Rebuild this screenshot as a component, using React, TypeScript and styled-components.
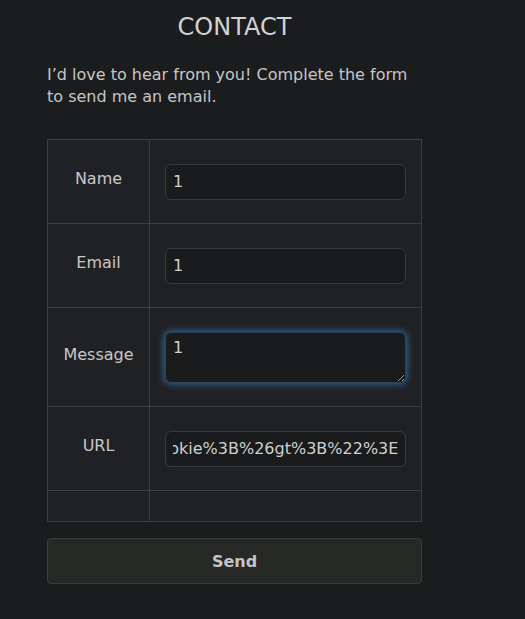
import React, { useEffect, useRef } from "react";
import styled, { createGlobalStyle } from "styled-components";

const Global = createGlobalStyle`
  html, body { margin: 0; padding: 0; background: #1b1c1e; }
  body { font-family: "DejaVu Sans", "Liberation Sans", sans-serif; color: #c9c9c9; }
`;

const Page = styled.div`
  width: 375px;
  margin-left: 47px;
  padding-top: 12px;
`;

const Title = styled.h1`
  margin: 0;
  text-align: center;
  font-size: 24px;
  font-weight: normal;
  line-height: 30px;
  color: #d2d2d2;
`;

const Intro = styled.p`
  margin: 22px 0 31px;
  font-size: 16px;
  line-height: 22px;
  color: #c6c6c6;
`;

const Table = styled.table`
  width: 375px;
  table-layout: fixed;
  border-collapse: collapse;
  background: #202124;
`;

const Row = styled.tr<{ $h: number }>`
  height: ${(p) => p.$h}px;
`;

const LabelCell = styled.td`
  width: 101px;
  border: 1px solid #3d3e40;
  text-align: center;
  vertical-align: middle;
  font-size: 16px;
  color: #c8c8c8;
  padding: 0 0 6px;
`;

const FieldCell = styled.td`
  border: 1px solid #3d3e40;
  padding: 0 0 0 15px;
  vertical-align: middle;
`;

const Input = styled.input`
  display: block;
  box-sizing: border-box;
  width: 241px;
  height: 36px;
  padding: 0 7px;
  background: #1a1b1d;
  border: 1px solid #3a3b3d;
  border-radius: 6px;
  color: #cfcfcf;
  font-family: "DejaVu Sans", sans-serif;
  font-size: 16px;
  outline: none;
`;

const TextArea = styled.textarea`
  display: block;
  box-sizing: border-box;
  width: 241px;
  height: 51px;
  padding: 5px 7px;
  background: #1a1b1d;
  border: 1px solid #2c4256;
  border-radius: 6px;
  color: #cfcfcf;
  font-family: "DejaVu Sans", sans-serif;
  font-size: 16px;
  line-height: 20px;
  outline: none;
  resize: vertical;
  box-shadow: 0 0 7px 1px rgba(52, 120, 180, 0.85);
  caret-color: #d0d0d0;
`;

const SendButton = styled.button`
  display: block;
  box-sizing: border-box;
  width: 375px;
  height: 46px;
  margin-top: 16px;
  background: #262925;
  border: 1px solid #3b3e3b;
  border-radius: 4px;
  color: #c4c4c4;
  font-family: "DejaVu Sans", sans-serif;
  font-size: 16px;
  font-weight: bold;
  cursor: pointer;
`;

export default function App() {
  const urlRef = useRef<HTMLInputElement>(null);
  const msgRef = useRef<HTMLTextAreaElement>(null);
  useEffect(() => {
    const el = urlRef.current;
    if (el) el.scrollLeft = el.scrollWidth;
    const m = msgRef.current;
    if (m) {
      m.focus();
      m.setSelectionRange(1, 1);
    }
  }, []);
  return (
    <>
      <Global />
      <Page>
        <Title>CONTACT</Title>
        <Intro>
          I’d love to hear from you! Complete the form to send me an email.
        </Intro>
        <form onSubmit={(e) => e.preventDefault()}>
          <Table>
            <tbody>
              <Row $h={84}>
                <LabelCell>Name</LabelCell>
                <FieldCell>
                  <Input defaultValue="1" />
                </FieldCell>
              </Row>
              <Row $h={84}>
                <LabelCell>Email</LabelCell>
                <FieldCell>
                  <Input defaultValue="1" />
                </FieldCell>
              </Row>
              <Row $h={99}>
                <LabelCell>Message</LabelCell>
                <FieldCell>
                  <TextArea ref={msgRef} defaultValue="1" />
                </FieldCell>
              </Row>
              <Row $h={84}>
                <LabelCell>URL</LabelCell>
                <FieldCell>
                  <Input
                    ref={urlRef}
                    defaultValue="%22%3E%3Cscript%3Ealert(document.cookie%3B%26gt%3B%22%3E"
                  />
                </FieldCell>
              </Row>
              <Row $h={31}>
                <LabelCell />
                <FieldCell />
              </Row>
            </tbody>
          </Table>
          <SendButton type="submit">Send</SendButton>
        </form>
      </Page>
    </>
  );
}
